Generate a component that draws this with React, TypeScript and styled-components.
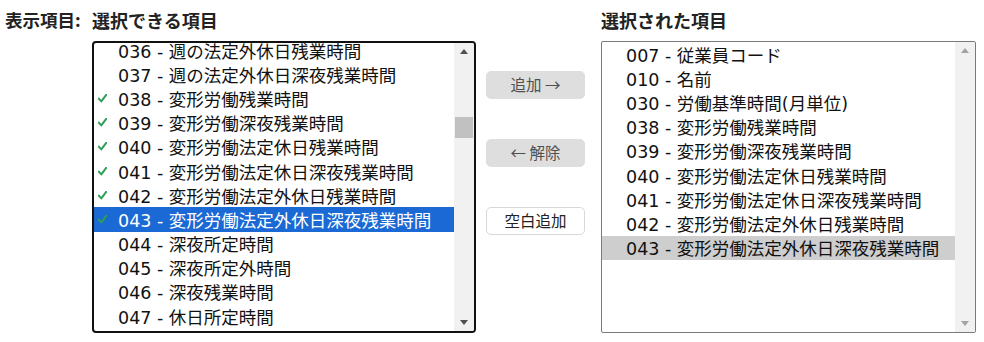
import React from "react";
import styled, { createGlobalStyle } from "styled-components";

const GlobalStyle = createGlobalStyle`
  html, body { margin: 0; padding: 0; background: #fff; }
  body { font-family: "DejaVu Sans", "Noto Sans CJK JP", sans-serif; color: #111; }
`;

const Page = styled.div`
  display: flex;
  align-items: flex-start;
  padding: 7px 0 0 5px;
`;

const Label = styled.div`
  width: 87px;
  font-family: "Noto Sans CJK JP", sans-serif;
  font-weight: 700;
  font-size: 17.5px;
  line-height: 26px;
  color: #222;
  white-space: nowrap;
`;

const Column = styled.div`
  display: flex;
  flex-direction: column;
`;

const Heading = styled.div`
  height: 34px;
  font-family: "Noto Sans CJK JP", sans-serif;
  font-weight: 700;
  font-size: 18px;
  line-height: 26px;
  color: #222;
  white-space: nowrap;
`;

const ListBox = styled.div<{ $focused?: boolean; $width: number }>`
  box-sizing: border-box;
  width: ${(p) => p.$width}px;
  height: 292px;
  display: flex;
  overflow: hidden;
  background: #fff;
  border: ${(p) => (p.$focused ? "2px solid #111" : "1px solid #7a7a7a")};
  border-radius: ${(p) => (p.$focused ? "4px" : "2px")};
`;

const Viewport = styled.div`
  flex: 1;
  overflow: hidden;
`;

const Items = styled.div<{ $scroll: number }>`
  margin-top: ${(p) => -p.$scroll}px;
`;

const Row = styled.div<{ $state?: "active" | "inactive" }>`
  display: flex;
  align-items: center;
  height: 24.2px;
  font-size: 17.5px;
  white-space: nowrap;
  color: ${(p) => (p.$state === "active" ? "#fff" : "#111")};
  background: ${(p) =>
    p.$state === "active" ? "#1a69d4" : p.$state === "inactive" ? "#cecece" : "transparent"};
`;

const CheckSlot = styled.span`
  flex: none;
  width: 24px;
  display: flex;
  align-items: center;
  padding-left: 4px;
  box-sizing: border-box;
`;

const Scrollbar = styled.div`
  flex: none;
  width: 20px;
  background: #f1f1f1;
  display: flex;
  flex-direction: column;
`;

const ArrowButton = styled.div`
  height: 17px;
  flex: none;
  display: flex;
  align-items: center;
  justify-content: center;
`;

const Triangle = styled.span<{ $dir: "up" | "down"; $disabled?: boolean }>`
  width: 0;
  height: 0;
  border-left: 4.5px solid transparent;
  border-right: 4.5px solid transparent;
  ${(p) =>
    p.$dir === "up"
      ? `border-bottom: 5px solid ${p.$disabled ? "#a3a3a3" : "#505050"};`
      : `border-top: 5px solid ${p.$disabled ? "#a3a3a3" : "#505050"};`}
`;

const Track = styled.div`
  flex: 1;
  padding: 0 1px;
`;

const Thumb = styled.div<{ $top: number; $height: number }>`
  margin-top: ${(p) => p.$top}px;
  height: ${(p) => p.$height}px;
  background: #c1c1c1;
`;

const Middle = styled.div`
  display: flex;
  flex-direction: column;
  gap: 40px;
  padding-top: 64px;
  margin: 0 16px 0 10px;
`;

const Button = styled.button<{ $variant?: "disabled" | "normal" }>`
  box-sizing: border-box;
  width: 99px;
  height: 28px;
  border-radius: 5px;
  font-family: "Noto Sans CJK JP", sans-serif;
  font-size: 15.5px;
  line-height: 1;
  padding: 0;
  cursor: pointer;
  background: ${(p) => (p.$variant === "disabled" ? "#dedede" : "#fff")};
  border: 1px solid ${(p) => (p.$variant === "disabled" ? "#dedede" : "#d8d8d8")};
  color: ${(p) => (p.$variant === "disabled" ? "#505050" : "#222")};
`;

const Check = () => (
  <svg width="9" height="9" viewBox="0 0 9 9">
    <path d="M0.8 4.6 L3.3 7.4 L8.2 0.8" fill="none" stroke="#2f9e58" strokeWidth="2" strokeLinecap="round" strokeLinejoin="round" />
  </svg>
);

type Item = { code: string; name: string; checked?: boolean };

const available: Item[] = [
  { code: "036", name: "週の法定外休日残業時間" },
  { code: "037", name: "週の法定外休日深夜残業時間" },
  { code: "038", name: "変形労働残業時間", checked: true },
  { code: "039", name: "変形労働深夜残業時間", checked: true },
  { code: "040", name: "変形労働法定休日残業時間", checked: true },
  { code: "041", name: "変形労働法定休日深夜残業時間", checked: true },
  { code: "042", name: "変形労働法定外休日残業時間", checked: true },
  { code: "043", name: "変形労働法定外休日深夜残業時間", checked: true },
  { code: "044", name: "深夜所定時間" },
  { code: "045", name: "深夜所定外時間" },
  { code: "046", name: "深夜残業時間" },
  { code: "047", name: "休日所定時間" },
];

const selected: Item[] = [
  { code: "007", name: "従業員コード" },
  { code: "010", name: "名前" },
  { code: "030", name: "労働基準時間(月単位)" },
  { code: "038", name: "変形労働残業時間" },
  { code: "039", name: "変形労働深夜残業時間" },
  { code: "040", name: "変形労働法定休日残業時間" },
  { code: "041", name: "変形労働法定休日深夜残業時間" },
  { code: "042", name: "変形労働法定外休日残業時間" },
  { code: "043", name: "変形労働法定外休日深夜残業時間" },
];

export default function App() {
  return (
    <>
      <GlobalStyle />
      <Page>
        <Label>表示項目:</Label>
        <Column>
          <Heading>選択できる項目</Heading>
          <ListBox $focused $width={384}>
            <Viewport>
              <Items $scroll={5}>
                {available.map((it) => (
                  <Row key={it.code} $state={it.code === "043" ? "active" : undefined}>
                    <CheckSlot>{it.checked && <Check />}</CheckSlot>
                    {it.code} - {it.name}
                  </Row>
                ))}
              </Items>
            </Viewport>
            <Scrollbar>
              <ArrowButton>
                <Triangle $dir="up" />
              </ArrowButton>
              <Track>
                <Thumb $top={57} $height={21} />
              </Track>
              <ArrowButton>
                <Triangle $dir="down" />
              </ArrowButton>
            </Scrollbar>
          </ListBox>
        </Column>
        <Middle>
          <Button $variant="disabled">追加 →</Button>
          <Button $variant="disabled">← 解除</Button>
          <Button $variant="normal">空白追加</Button>
        </Middle>
        <Column>
          <Heading>選択された項目</Heading>
          <ListBox $width={375}>
            <Viewport>
              <Items $scroll={0}>
                {selected.map((it) => (
                  <Row key={it.code} $state={it.code === "043" ? "inactive" : undefined}>
                    <CheckSlot />
                    {it.code} - {it.name}
                  </Row>
                ))}
              </Items>
            </Viewport>
            <Scrollbar>
              <ArrowButton>
                <Triangle $dir="up" $disabled />
              </ArrowButton>
              <Track />
              <ArrowButton>
                <Triangle $dir="down" $disabled />
              </ArrowButton>
            </Scrollbar>
          </ListBox>
        </Column>
      </Page>
    </>
  );
}
